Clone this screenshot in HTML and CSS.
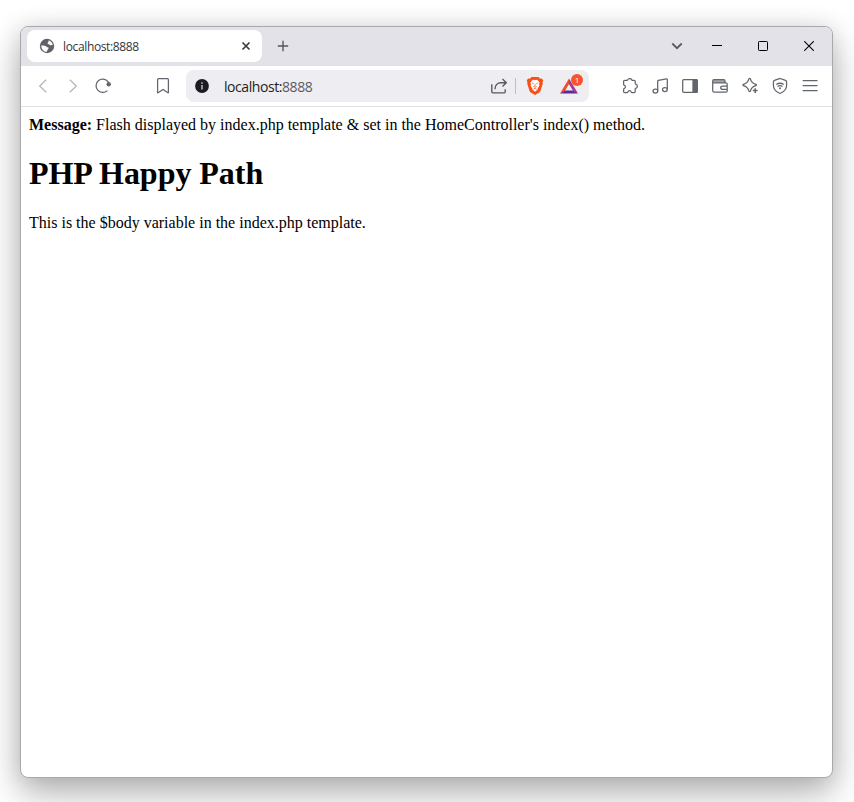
FILE: index.html
```html
<!DOCTYPE html>
<html lang="en">
<head>
<meta charset="utf-8">
<title>localhost:8888</title>
<link rel="stylesheet" href="styles.css">
</head>
<body>
<div class="window">
  <header class="titlebar">
    <div class="tab">
      <svg class="globe" width="16" height="16" viewBox="0 0 16 16"><circle cx="8" cy="8" r="7.2" fill="#5f6368"/><path d="M9.600 2.300c2.100.6 3.700 2.300 4.200 4.400-.7-.2-1.200.6-2 .6-.7 0-1.300-.3-1.500-1-.8.1-1.800-.1-1.700-1.200.1-.6.6-.6.9-1.100.3-.5-.1-1.100.1-1.700zM2.200 7.400c1.800 0 3.900-.2 5 1 .7.900 2 .4 2.400 1.400.3.900-.7 1.400-1.100 2-.4.7 0 1.600-.9 2-3 0-5.300-2.800-5.400-6.400z" fill="#fff"/></svg>
      <span class="tab-title">localhost:8888</span>
      <svg class="tab-close" width="10" height="10" viewBox="0 0 10 10"><path d="M1.500 1.500l7 7m0-7l-7 7" fill="none" stroke="#3b3d42" stroke-width="1.700"/></svg>
    </div>
    <svg class="new-tab" width="12" height="12" viewBox="0 0 12 12"><path d="M6 .8v10.400M.8 6h10.400" fill="none" stroke="#55575c" stroke-width="1.400"/></svg>
    <div class="controls">
      <span class="control narrow"><svg width="12" height="8" viewBox="0 0 12 8"><path d="M1.300 1.500L6 6.200l4.700-4.700" fill="none" stroke="#5a5b62" stroke-width="1.800"/></svg></span>
      <span class="control"><svg width="10" height="10" viewBox="0 0 10 10"><path d="M0 4.500h10" stroke="#000"/></svg></span>
      <span class="control"><svg width="10" height="10" viewBox="0 0 10 10"><rect x=".5" y=".5" width="9" height="9" rx=".8" fill="none" stroke="#000"/></svg></span>
      <span class="control"><svg width="10" height="10" viewBox="0 0 10 10"><path d="M.2.2l9.600 9.600m0-9.600L.2 9.800" fill="none" stroke="#000" stroke-width="1.100"/></svg></span>
    </div>
  </header>

  <nav class="toolbar">
    <span class="slot faded"><svg width="18" height="18" viewBox="0 0 18 18"><path d="M12.200 2.800L5.700 9l6.500 6.200"/></svg></span>
    <span class="slot faded"><svg width="18" height="18" viewBox="0 0 18 18"><path d="M5.800 2.800L12.300 9l-6.500 6.200"/></svg></span>
    <span class="slot"><svg width="18" height="18" viewBox="0 0 18 18"><path d="M13.400 13.600A6.700 6.700 0 1 1 14.100 4.700L15.200 7.500"/><circle cx="14.700" cy="7.200" r="2.200" fill="#62656b" stroke="none"/></svg></span>
    <span class="slot bookmark"><svg width="18" height="18" viewBox="0 0 18 18"><path d="M3.600 2.700q0-1 1-1h8.800q1 0 1 1v12.600q0 .9-.8.3L9 12.600l-4.600 3q-.8.600-.8-.3z"/></svg></span>
    <div class="address">
      <svg width="14" height="14" viewBox="0 0 14 14"><circle cx="7" cy="7" r="6.900" fill="#1b1b21"/><path d="M7 3.300v1.500M7 6v4.500" stroke="#c9c8d0" stroke-width="1.400"/></svg>
      <span class="url">localhost:<span class="port">8888</span></span>
      <svg class="share" width="18" height="18" viewBox="0 0 18 18"><path d="M1.800 7.300v7.500q0 1 1 1h11.400q1 0 1-1v-2.600M5 12.200c0-4 2.500-6.500 6-6.500h5M12.500 1.900l3.800 3.800-3.800 3.800" fill="none" stroke="#56585f" stroke-width="1.350"/></svg>
      <span class="divider"></span>
      <svg class="brave" width="18" height="20" viewBox="0 0 18 20"><path d="M5.500 1h7l1.600 1.700 1.800-.2 1.300 2-.7 1.900.3 1-2.200 7.200q-.3 1-1.300 1.800L9 19.100l-4.300-2.700q-1-.8-1.300-1.800L1.200 7.400l.3-1-.7-1.900 1.300-2 1.800.2z" fill="#fb4d16"/><path d="M9 4.100l2.300-.4 2.300 2.700-.6 2 .5 1.400-1.700 2.500-.4 1.500L9 15.700l-2.400-1.900-.4-1.500-1.700-2.500.5-1.400-.6-2 2.300-2.700z" fill="#fff"/><path d="M5.700 7l2.100.8M12.300 7l-2.100.8M9 7.800v3M7.300 10.400L9 11.400l1.700-1M7.400 13.200L9 12.300l1.600.9" fill="none" stroke="#fb4d16" stroke-width=".7"/></svg>
      <span class="rewards">
        <svg width="20" height="18" viewBox="0 0 20 18"><path d="M10 1.500L1 16.500l5-2.800L10 7z" fill="#f04d2b"/><path d="M10 1.500l9 15-5-2.800L10 7z" fill="#a23a91"/><path d="M1 16.500h18l-5-2.900H6z" fill="#5d2d91"/></svg>
        <span class="badge">1</span>
      </span>
    </div>
    <div class="tools">
      <span class="slot"><svg width="18" height="18" viewBox="0 0 18 18"><path d="M2.600 4.300q0-1 1-1H6q.5 0 .7-.6C7.100 1.300 10.100 1.200 10.700 2.700q.2.600.8.600h1.700q1 0 1 1V6.500q0 .5.500.7c2.200.7 2.200 3.500 0 4.100q-.5.200-.5.700v2.600q0 1-1 1h-2.300q-.5 0-.7-.6c-.6-1.800-2.700-1.800-3.400 0q-.2.600-.7.600H3.600q-1 0-1-1v-2.200q0-.5.600-.8c1.700-.9 1.700-2.700 0-3.400q-.6-.3-.6-.8z"/></svg></span>
      <span class="slot"><svg width="18" height="18" viewBox="0 0 18 18"><path d="M6.700 14V4.200q0-.7.700-.9l8.100-1.500q.8-.1.800.7v10"/><ellipse cx="4.400" cy="14.100" rx="2.400" ry="2"/><ellipse cx="13.900" cy="12.500" rx="2.400" ry="2"/></svg></span>
      <span class="slot"><svg width="18" height="18" viewBox="0 0 18 18"><rect x="1.700" y="2.700" width="14.600" height="12.600" rx="1"/><path d="M12 3h4v12h-4z" fill="#62656b"/></svg></span>
      <span class="slot"><svg width="18" height="18" viewBox="0 0 18 18"><path d="M2 3h12v2.800H2z" fill="#a1a3a8" stroke="none"/><path d="M16.200 7.500V14q0 1.200-1.200 1.200H3.200Q1.700 15.200 1.700 13.700V4q0-1.300 1.300-1.300h9.700q1.300 0 1.300 1.300v1.900M2 5.900h12.700q1.500 0 1.500 1.300v5.200h-4.500q-2 0-2-1.700t2-1.700h4.500"/></svg></span>
      <span class="slot"><svg width="18" height="18" viewBox="0 0 18 18"><path d="M7.900 1.800q.8-1 1.500 0c.7 3.200 1.800 4.500 5.500 5.500q1 .7 0 1.400c-3.700 1-4.800 2.300-5.500 5.500q-.7 1-1.500 0C7.100 11 6 9.700 2.500 8.700q-1-.7 0-1.400C6 6.300 7.100 5 7.900 1.800z"/><path d="M14.200 11.200v4.800M11.800 13.600h4.800" stroke-width="1.500"/></svg></span>
      <span class="slot"><svg width="18" height="18" viewBox="0 0 18 18"><path d="M9 1.500l5.500 1.900q1.100.4 1.100 1.500v3.300c0 4-2.500 6.600-6.600 8.300-4.100-1.700-6.600-4.300-6.600-8.300V4.900q0-1.100 1.100-1.500z"/><path d="M5.300 7.600q3.700-2.700 7.400 0M6.500 9.500q2.500-1.700 5 0"/><circle cx="9" cy="11.300" r="1" fill="#62656b" stroke="none"/></svg></span>
      <span class="slot"><svg width="18" height="18" viewBox="0 0 18 18"><path d="M1.700 3.500h14.800M1.700 8.500h14.800M1.700 13.500h14.800"/></svg></span>
    </div>
  </nav>

  <main class="page">
    <div><b>Message:</b> Flash displayed by index.php template &amp; set in the HomeController's index() method.</div>
    <h1>PHP Happy Path</h1>
    <p>This is the $body variable in the index.php template.</p>
  </main>
</div>
</body>
</html>
```
FILE: styles.css
```css
* { box-sizing: border-box; }
html { height: 802px; overflow: hidden; background: #fff; }
body {
  margin: 0;
  height: 802px;
  padding: 26px 21px 24px 20px;
  overflow: hidden;
}
svg { display: block; flex: none; }
.window {
  display: flex;
  flex-direction: column;
  height: 752px;
  border: 1px solid #a9a9ab;
  border-radius: 8px;
  background: #fff;
  box-shadow: 0 16px 36px rgba(0, 0, 0, .29), 0 1px 22px rgba(0, 0, 0, .11);
}
.titlebar {
  display: flex;
  align-items: center;
  height: 39px;
  padding: 0 0 1px 6px;
  border-radius: 7px 7px 0 0;
  background: #e3e2e8;
}
.tab {
  display: flex;
  align-items: center;
  width: 235px;
  height: 32px;
  padding: 0 11px 0 12px;
  border-radius: 8px;
  background: #fff;
}
.tab-title {
  flex: 1;
  margin-left: 8px;
  font-family: "Open Sans", sans-serif;
  font-size: 12px;
  letter-spacing: -.36px;
  color: #35363b;
}
.new-tab { margin-left: 15px; }
.controls { display: flex; margin-left: auto; }
.control { display: flex; align-items: center; justify-content: center; width: 46px; height: 32px; }
.control.narrow { width: 34px; }
.toolbar {
  display: flex;
  align-items: center;
  height: 41px;
  padding: 0 7px;
  border-bottom: 1px solid #e2e2e4;
}
.slot { display: flex; align-items: center; justify-content: center; width: 30px; height: 30px; }
.slot svg { fill: none; stroke: #62656b; stroke-width: 1.25; }
.slot.faded svg { stroke: #b5b6b9; }
.bookmark { margin-left: 30px; }
.address {
  display: flex;
  align-items: center;
  width: 403px;
  height: 32px;
  margin-left: 8px;
  padding: 0 10px 0 9px;
  border-radius: 8px;
  background: #ededf2;
}
.url {
  margin-left: 15px;
  font: 14px "Open Sans", sans-serif;
  letter-spacing: -.43px;
  color: #1d1d22;
}
.port { color: #5c5c63; }
.share { margin-left: auto; }
.divider { width: 1px; height: 16px; margin: 0 10px 0 7px; background: #bdbdc4; }
.rewards { position: relative; margin-left: 15px; }
.badge {
  position: absolute;
  left: 12px;
  top: -3px;
  width: 12px;
  height: 12px;
  border-radius: 50%;
  background: #fb542b;
  color: #fff;
  font: 8px/12px "Open Sans", sans-serif;
  text-align: center;
}
.tools { display: flex; margin-left: auto; }
.page { padding: 9px 8px 8px; font: 16px "Liberation Serif", serif; color: #000; }
.page h1 { margin: 21.44px 0; font-size: 32px; letter-spacing: -.04px; }
.page p { margin: 0; }
```
